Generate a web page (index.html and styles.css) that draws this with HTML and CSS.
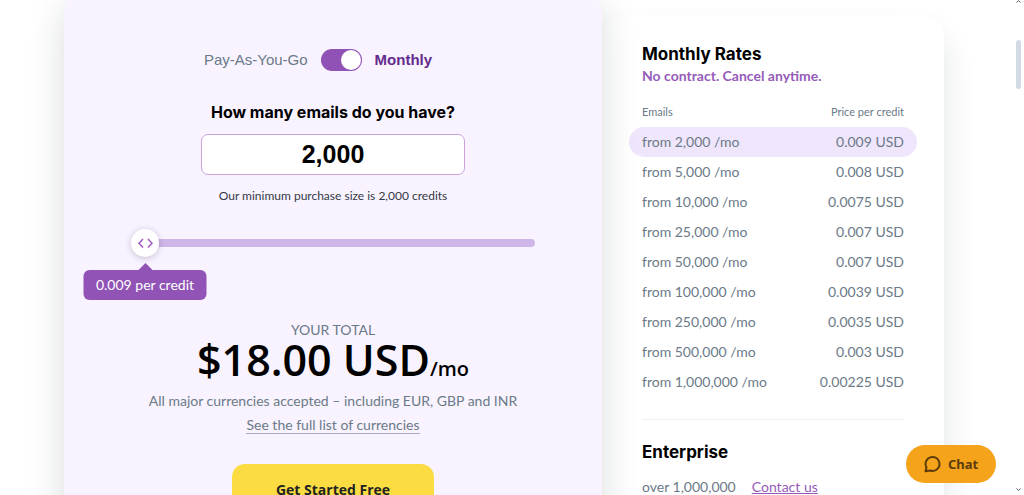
FILE: index.html
```html
<!DOCTYPE html>
<html lang="en">
<head>
<meta charset="utf-8">
<meta name="viewport" content="width=device-width, initial-scale=1">
<title>Pricing</title>
<link rel="stylesheet" href="styles.css">
</head>
<body>
<main class="pricing">
  <section class="calculator">
    <label class="plan">
      <span class="plan-name">Pay-As-You-Go</span>
      <input class="plan-switch" type="checkbox" role="switch" checked>
      <span class="plan-name plan-active">Monthly</span>
    </label>
    <label class="question" for="emails">How many emails do you have?</label>
    <input class="amount" id="emails" type="text" value="2,000">
    <p class="note">Our minimum purchase size is 2,000 credits</p>
    <div class="slider">
      <input class="range" type="range" min="2000" max="1000000" value="2000" aria-label="Number of emails">
      <svg class="handle-icon" viewBox="0 0 28 28" aria-hidden="true"><path d="M12 10L8 14.200L12 18.400M17 10L21 14.200L17 18.400"/></svg>
      <output class="tip" for="emails">0.009 per credit</output>
    </div>
    <p class="total-label">YOUR TOTAL</p>
    <p class="total">$18.00 USD<span class="period">/mo</span></p>
    <p class="currencies">All major currencies accepted – including EUR, GBP and INR</p>
    <a class="currency-link" href="#">See the full list of currencies</a>
    <button class="start" type="button">Get Started Free</button>
  </section>
  <section class="rates">
    <h2 class="title">Monthly Rates</h2>
    <p class="promise">No contract. Cancel anytime.</p>
    <table class="rate-table">
      <thead><tr><th>Emails</th><th>Price per credit</th></tr></thead>
      <tbody>
        <tr class="current"><td>from 2,000 /mo</td><td>0.009 USD</td></tr>
        <tr><td>from 5,000 /mo</td><td>0.008 USD</td></tr>
        <tr><td>from 10,000 /mo</td><td>0.0075 USD</td></tr>
        <tr><td>from 25,000 /mo</td><td>0.007 USD</td></tr>
        <tr><td>from 50,000 /mo</td><td>0.007 USD</td></tr>
        <tr><td>from 100,000 /mo</td><td>0.0039 USD</td></tr>
        <tr><td>from 250,000 /mo</td><td>0.0035 USD</td></tr>
        <tr><td>from 500,000 /mo</td><td>0.003 USD</td></tr>
        <tr><td>from 1,000,000 /mo</td><td>0.00225 USD</td></tr>
      </tbody>
    </table>
    <div class="enterprise">
      <h2 class="title">Enterprise</h2>
      <p class="contact"><span>over 1,000,000</span><a class="contact-link" href="#">Contact us</a></p>
    </div>
  </section>
</main>
<button class="chat" type="button">
  <svg class="chat-icon" viewBox="0 0 18 18" aria-hidden="true"><path d="M2.500 12.400A7 7 0 1 1 6.200 15.500L1.500 16.300Z"/></svg>
  Chat
</button>
<div class="scrollbar" aria-hidden="true">
  <svg class="arrow" viewBox="0 0 5 3"><path d="M.5 2.500L2.500 .6L4.500 2.500"/></svg>
  <div class="scroll-thumb"></div>
  <svg class="arrow" viewBox="0 0 5 3"><path d="M.5 .5L2.500 2.400L4.500 .5"/></svg>
</div>
</body>
</html>
```

FILE: styles.css
```css
* { box-sizing: border-box; }
body {
  margin: 0;
  height: 100vh;
  overflow: hidden;
  background: #fff;
  color: #6b7a88;
  font: 14px/20px Lato, "Open Sans", sans-serif;
}
h2, p { margin: 0; }
.pricing {
  display: grid;
  grid-template-columns: 538fr 342fr;
  align-items: start;
  padding: 0 80px 0 64px;
}
.calculator {
  position: relative;
  z-index: 1;
  display: flex;
  flex-direction: column;
  align-items: center;
  margin-top: -10px;
  padding: 59px 67px 40px;
  border-radius: 24px;
  background: #f8f3ff;
  box-shadow: 0 12px 36px rgba(20, 35, 30, .16);
}
.plan {
  display: flex;
  align-items: center;
  gap: 13px;
  height: 22px;
  padding-right: 30px;
  font: 15px/22px "Liberation Sans", Arial, sans-serif;
}
.plan-active { color: #642b8c; font-weight: 700; }
.plan-switch {
  appearance: none;
  display: flex;
  justify-content: flex-end;
  width: 41px;
  height: 22px;
  margin: 0;
  padding: 1px;
  border-radius: 11px;
  background: #9152b6;
}
.plan-switch::before {
  content: "";
  width: 20px;
  height: 20px;
  border-radius: 50%;
  background: #fff;
}
.plan-switch:not(:checked) { justify-content: flex-start; }
.question {
  margin-top: 29px;
  color: #000;
  font: 700 16px/24px Inter, sans-serif;
}
.amount {
  width: 264px;
  height: 41px;
  margin-top: 10px;
  border: 1px solid #c9a2dc;
  border-radius: 7px;
  background: #fff;
  color: #000;
  font: 700 25px/36px "Liberation Sans", Arial, sans-serif;
  text-align: center;
}
.note {
  margin-top: 11px;
  color: #343846;
  font-size: 12px;
}
.slider {
  position: relative;
  align-self: stretch;
  height: 28px;
  margin-top: 23px;
}
.range {
  appearance: none;
  display: block;
  width: 100%;
  height: 28px;
  margin: 0;
  background: transparent;
}
.range::-webkit-slider-runnable-track {
  height: 8px;
  border-radius: 4px;
  background: #ceb7e8;
}
.range::-webkit-slider-thumb {
  appearance: none;
  width: 28px;
  height: 28px;
  margin-top: -10px;
  border-radius: 50%;
  background: #fff;
  box-shadow: 0 1px 6px rgba(60, 30, 80, .25);
}
.handle-icon {
  position: absolute;
  top: 0;
  left: 0;
  width: 28px;
  height: 28px;
  fill: none;
  stroke: #a15bc1;
  stroke-width: 1.5;
  pointer-events: none;
}
.tip {
  position: absolute;
  top: 41px;
  left: 14px;
  width: 123px;
  border-radius: 6px;
  background: #9154b6;
  color: #fff;
  line-height: 30px;
  text-align: center;
  transform: translateX(-50%);
}
.tip::before {
  content: "";
  position: absolute;
  bottom: 100%;
  left: 50%;
  border: 7px solid transparent;
  border-top: 0;
  border-bottom-color: #9154b6;
  transform: translateX(-50%);
}
.total-label { margin-top: 63px; }
.total {
  color: #000;
  font: 600 43px/40px "Open Sans", sans-serif;
}
.period { font-size: 20px; line-height: 20px; }
.currencies { margin-top: 11px; }
.currency-link {
  margin-top: 5px;
  border-bottom: 1px solid #aaa9bd;
  color: inherit;
  line-height: 17px;
  text-decoration: none;
}
.start {
  width: 202px;
  height: 52px;
  margin-top: 30px;
  padding: 0;
  border: 0;
  border-radius: 13px;
  background: #fbdd43;
  color: #222;
  font: 700 14px/20px "Open Sans", sans-serif;
}
.rates {
  margin-top: 15px;
  padding: 27px 27px 40px;
  border-radius: 24px;
  background: #fff;
  box-shadow: 0 20px 32px rgba(20, 30, 30, .12);
}
.title {
  padding: 0 13px;
  color: #000;
  font: 700 17px/24px Inter, sans-serif;
}
.promise {
  padding: 0 13px;
  color: #955bb9;
  font-weight: 700;
}
.rate-table {
  width: 100%;
  margin-top: 15px;
  border-collapse: separate;
  border-spacing: 0;
}
.rate-table th, .rate-table td {
  height: 30px;
  padding: 0 13px;
  text-align: left;
}
.rate-table th {
  height: 26px;
  padding-bottom: 4px;
  font-size: 11px;
  font-weight: 400;
  line-height: 16px;
}
.rate-table th:last-child, .rate-table td:last-child { text-align: right; }
.current td { background: #efe6fc; }
.current td:first-child { border-radius: 15px 0 0 15px; }
.current td:last-child { border-radius: 0 15px 15px 0; }
.enterprise {
  margin: 22px 13px 0;
  padding-top: 20px;
  border-top: 1px solid #f1f1f4;
}
.enterprise .title { padding: 0; }
.contact {
  display: flex;
  gap: 16px;
  margin-top: 13px;
}
.contact-link { color: #955bb9; }
.chat {
  position: fixed;
  right: 28px;
  bottom: 12px;
  z-index: 2;
  display: flex;
  align-items: center;
  justify-content: center;
  gap: 6px;
  width: 90px;
  height: 38px;
  padding: 0;
  border: 0;
  border-radius: 19px;
  background: #f4a31a;
  color: #5c3c0b;
  font: 700 13px/20px "Noto Sans", sans-serif;
}
.chat-icon {
  width: 18px;
  height: 18px;
  fill: none;
  stroke: #5c3c0b;
  stroke-width: 2;
  stroke-linejoin: round;
}
.scrollbar {
  position: fixed;
  top: 0;
  right: 3px;
  bottom: 4px;
  display: flex;
  flex-direction: column;
  justify-content: space-between;
  width: 5px;
}
.scroll-thumb {
  height: 49px;
  margin: 37px 0 auto;
  border-radius: 3px;
  background: #d2dbe4;
}
.arrow {
  width: 5px;
  height: 3px;
  fill: none;
  stroke: #555;
}
```
